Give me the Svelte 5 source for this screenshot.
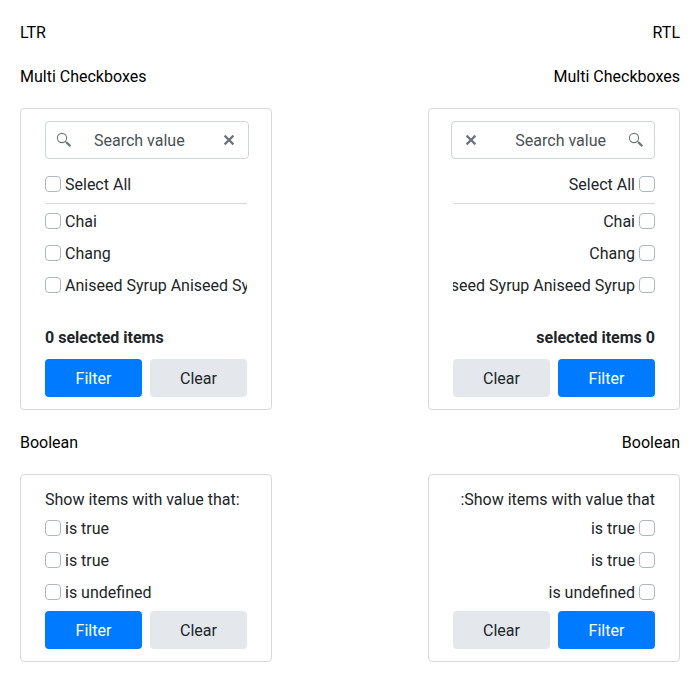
<script>
  const sides = ['ltr', 'rtl'];
  const items = ['Chai', 'Chang', 'Aniseed Syrup Aniseed Syrup'];
  const flags = ['is true', 'is true', 'is undefined'];
</script>

{#snippet check(label)}
  <label class="check"><span class="box"></span><span class="txt">{label}</span></label>
{/snippet}

{#snippet actions()}
  <div class="actions">
    <button class="primary">Filter</button>
    <button>Clear</button>
  </div>
{/snippet}

<main>
  {#each sides as dir}
    <section {dir}>
      <h2>{dir.toUpperCase()}</h2>
      <h2>Multi Checkboxes</h2>
      <div class="card multi">
        <div class="search">
          <svg class="mag" width="16" height="16" viewBox="0 0 16 16" fill="none" stroke="#6c757d">
            <circle cx="6" cy="6" r="4.6" stroke-width="1.1" />
            <path d="M9.3 9.3L11 11" stroke-width="1.2" />
            <path d="M10.4 10.4L14.4 14.2" stroke-width="2.2" />
          </svg>
          <span class="placeholder">Search value</span>
          <svg class="close" width="16" height="16" viewBox="0 0 16 16" fill="none" stroke="#6c757d" stroke-width="2.2">
            <path d="M3.6 3.6L12.4 12.4M12.4 3.6L3.6 12.4" />
          </svg>
        </div>
        <div class="all">{@render check('Select All')}</div>
        <div class="list">
          {#each items as item}{@render check(item)}{/each}
        </div>
        <div class="count">0 selected items</div>
        {@render actions()}
      </div>
      <h2>Boolean</h2>
      <div class="card bool">
        <div class="lead">Show items with value that:</div>
        {#each flags as flag}{@render check(flag)}{/each}
        {@render actions()}
      </div>
    </section>
  {/each}
</main>

<style>
  main {
    display: flex;
    justify-content: space-between;
    padding: 20px;
    font: 16px/26px Roboto, sans-serif;
    color: #212529;
  }
  section { width: 252px; }
  h2 { margin: 0 0 18px; font: inherit; color: #000; }
  .card {
    box-sizing: border-box;
    border: 1px solid #d9d9d9;
    border-radius: 4px;
    padding: 12px 24px;
    margin-bottom: 20px;
  }
  .multi { height: 302px; }
  .bool { height: 188px; }
  .search {
    box-sizing: border-box;
    width: 204px;
    height: 38px;
    border: 1px solid #ced4da;
    border-radius: 4px;
    display: flex;
    align-items: center;
    padding-inline: 10px 11px;
  }
  [dir='rtl'] .search { margin-inline-end: -2px; }
  .placeholder { flex: 1; padding-top: 2px; padding-inline-start: 22px; color: #495057; }
  .check { display: flex; align-items: center; height: 32px; overflow: hidden; white-space: nowrap; }
  .txt { padding-top: 2px; }
  .box {
    box-sizing: border-box;
    flex: none;
    width: 16px;
    height: 16px;
    border: 1px solid #adb5bd;
    border-radius: 4px;
    margin-inline-end: 4px;
  }
  .all { margin-top: 9px; padding-bottom: 3px; border-bottom: 1px solid #d9d9d9; }
  .list { height: 121px; padding-top: 1px; box-sizing: border-box; }
  .count { font-weight: 700; margin-bottom: 8px; }
  .actions { display: flex; gap: 8px; }
  .bool .actions { margin-top: 3px; }
  button {
    width: 97px;
    height: 38px;
    border: 0;
    border-radius: 4px;
    padding: 2px 0 0;
    font: inherit;
    color: #212529;
    background: #e4e7eb;
  }
  .primary { color: #fff; background: #007bff; }
  .lead { margin-bottom: -1px; }
</style>
